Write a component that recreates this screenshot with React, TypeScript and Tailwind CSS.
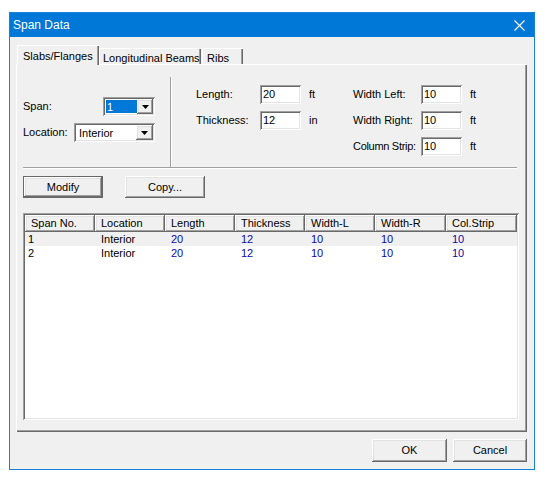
import React from 'react';

const raised =
  'shadow-[inset_-1px_-1px_#696969,inset_1px_1px_#ffffff,inset_-2px_-2px_#a0a0a0,inset_2px_2px_#e3e3e3]';
const sunken =
  'shadow-[inset_1px_1px_#a0a0a0,inset_-1px_-1px_#ffffff,inset_2px_2px_#696969,inset_-2px_-2px_#e3e3e3]';

function Arrow() {
  return (
    <svg width="7" height="4" viewBox="0 0 7 4">
      <polygon points="0,0 7,0 3.5,4" fill="#000" />
    </svg>
  );
}

function Combo({ width, value, selected }: { width: string; value: string; selected?: boolean }) {
  return (
    <div className={`flex h-[19px] ${width} bg-white p-[2px] ${sunken}`}>
      <div className="flex-1 py-[1px] pl-[1px]">
        {selected ? (
          <div className="h-full w-[31px] bg-[#0078d7] pl-[1px] leading-[15px] text-white">{value}</div>
        ) : (
          <div className="pl-[2px] leading-[15px]">{value}</div>
        )}
      </div>
      <div className={`flex w-[17px] items-center justify-center bg-[#f0f0f0] ${raised}`}>
        <Arrow />
      </div>
    </div>
  );
}

function Field({ value }: { value: string }) {
  return (
    <div className={`h-[19px] w-[41px] bg-white pl-[3px] leading-[19px] ${sunken}`}>{value}</div>
  );
}

function Button({ label, w, isDefault }: { label: string; w: string; isDefault?: boolean }) {
  return (
    <button
      className={`${w} flex items-center justify-center bg-[#f0f0f0] ${
        isDefault ? 'border border-[#696969]' : ''
      } ${raised}`}
    >
      {label}
    </button>
  );
}

const columns = ['Span No.', 'Location', 'Length', 'Thickness', 'Width-L', 'Width-R', 'Col.Strip'];
const widths = ['w-[70px]', 'w-[70px]', 'w-[70px]', 'w-[70px]', 'w-[70px]', 'w-[71px]', 'w-[71px]'];
const rows = [
  ['1', 'Interior', '20', '12', '10', '10', '10'],
  ['2', 'Interior', '20', '12', '10', '10', '10'],
];

export default function App() {
  return (
    <div className="h-[479px] w-[545px] bg-white pt-[12px] pl-[9px] font-['Liberation_Sans',Arial,sans-serif] text-[11px] text-black">
      <div className="flex h-[458px] w-[526px] flex-col border border-[#1883d7] bg-[#f0f0f0]">
        {/* title bar */}
        <div className="flex h-[24px] items-center justify-between bg-[#0078d7] pl-[3px] pr-[9px] text-white">
          <span className="text-[12px]">Span Data</span>
          <svg width="11" height="11" viewBox="0 0 11 11">
            <path d="M0.5 0.5 L10.5 10.5 M10.5 0.5 L0.5 10.5" stroke="#fff" strokeWidth="1.1" />
          </svg>
        </div>

        <div className="flex flex-1 flex-col px-[6px] pt-[8px]">
          {/* tabs */}
          <div className="flex h-[20px] items-end pl-[1px]">
            <div className="relative z-10 h-[20px] w-[82px] bg-[#f0f0f0] pl-[6px] pt-[3px] shadow-[inset_1px_1px_#ffffff,inset_-1px_0_#696969,inset_-2px_0_#a0a0a0]">
              Slabs/Flanges
            </div>
            <div className="h-[17px] w-[102px] pl-[4px] pt-[2px] shadow-[inset_1px_1px_#ffffff,inset_-1px_0_#696969,inset_-2px_0_#a0a0a0]">
              Longitudinal Beams
            </div>
            <div className="ml-[1px] h-[17px] w-[41px] pl-[5px] pt-[2px] shadow-[inset_1px_1px_#ffffff,inset_-1px_0_#696969,inset_-2px_0_#a0a0a0]">
              Ribs
            </div>
          </div>

          {/* tab panel */}
          <div className="-mt-[1px] h-[368px] w-[511px] shadow-[inset_1px_1px_#ffffff,inset_-1px_-1px_#696969,inset_-2px_-2px_#a0a0a0]">
            <div className="mt-[13px] flex h-[90px]">
              <div className="w-[154px] pl-[7px] pt-[20px]">
                <div className="flex w-[132px] items-center justify-between">
                  <span>Span:</span>
                  <Combo width="w-[52px]" value="1" selected />
                </div>
                <div className="mt-[7px] flex w-[132px] items-center justify-between">
                  <span>Location:</span>
                  <Combo width="w-[81px]" value="Interior" />
                </div>
              </div>
              <div className="w-[2px] border-l border-r border-l-[#a0a0a0] border-r-white" />
              <div className="grid grid-cols-[64px_41px_52px_68px_41px_auto] grid-rows-[19px_19px_19px] items-center gap-y-[7px] pl-[24px] pt-[8px]">
                <span>Length:</span>
                <Field value="20" />
                <span className="pl-[8px]">ft</span>
                <span>Width Left:</span>
                <Field value="10" />
                <span className="pl-[8px]">ft</span>

                <span>Thickness:</span>
                <Field value="12" />
                <span className="pl-[8px]">in</span>
                <span>Width Right:</span>
                <Field value="10" />
                <span className="pl-[8px]">ft</span>

                <span />
                <span />
                <span />
                <span className="tracking-[-0.3px] whitespace-nowrap">Column Strip:</span>
                <Field value="10" />
                <span className="pl-[8px]">ft</span>
              </div>
            </div>

            <div className="ml-[7px] h-[2px] w-[494px] border-t border-b border-t-[#a0a0a0] border-b-white" />

            <div className="ml-[7px] mt-[7px] flex h-[22px] gap-[22px]">
              <Button label="Modify" w="w-[80px]" isDefault />
              <Button label="Copy..." w="w-[80px]" />
            </div>

            {/* list */}
            <div className={`ml-[7px] mt-[15px] h-[207px] w-[496px] bg-white p-[2px] ${sunken}`}>
              <div className="flex h-[17px]">
                {columns.map((c, i) => (
                  <div
                    key={c}
                    className={`${widths[i]} bg-[#f0f0f0] pl-[6px] leading-[17px] ${raised}`}
                  >
                    {c}
                  </div>
                ))}
              </div>
              {rows.map((r, ri) => (
                <div key={ri} className={`flex h-[14px] ${ri === 0 ? 'bg-[#f0f0f0]' : ''}`}>
                  {r.map((v, i) => (
                    <div
                      key={i}
                      className={`${widths[i]} leading-[14px] ${i === 0 ? 'pl-[3px]' : 'pl-[6px]'} ${
                        i > 1 ? 'text-[#0a0aa8]' : ''
                      }`}
                    >
                      {v}
                    </div>
                  ))}
                </div>
              ))}
            </div>
          </div>

          {/* bottom buttons */}
          <div className="mt-[7px] flex h-[23px] w-[511px] justify-end gap-[6px]">
            <Button label="OK" w="w-[75px]" />
            <Button label="Cancel" w="w-[74px]" />
          </div>
        </div>
      </div>
    </div>
  );
}
